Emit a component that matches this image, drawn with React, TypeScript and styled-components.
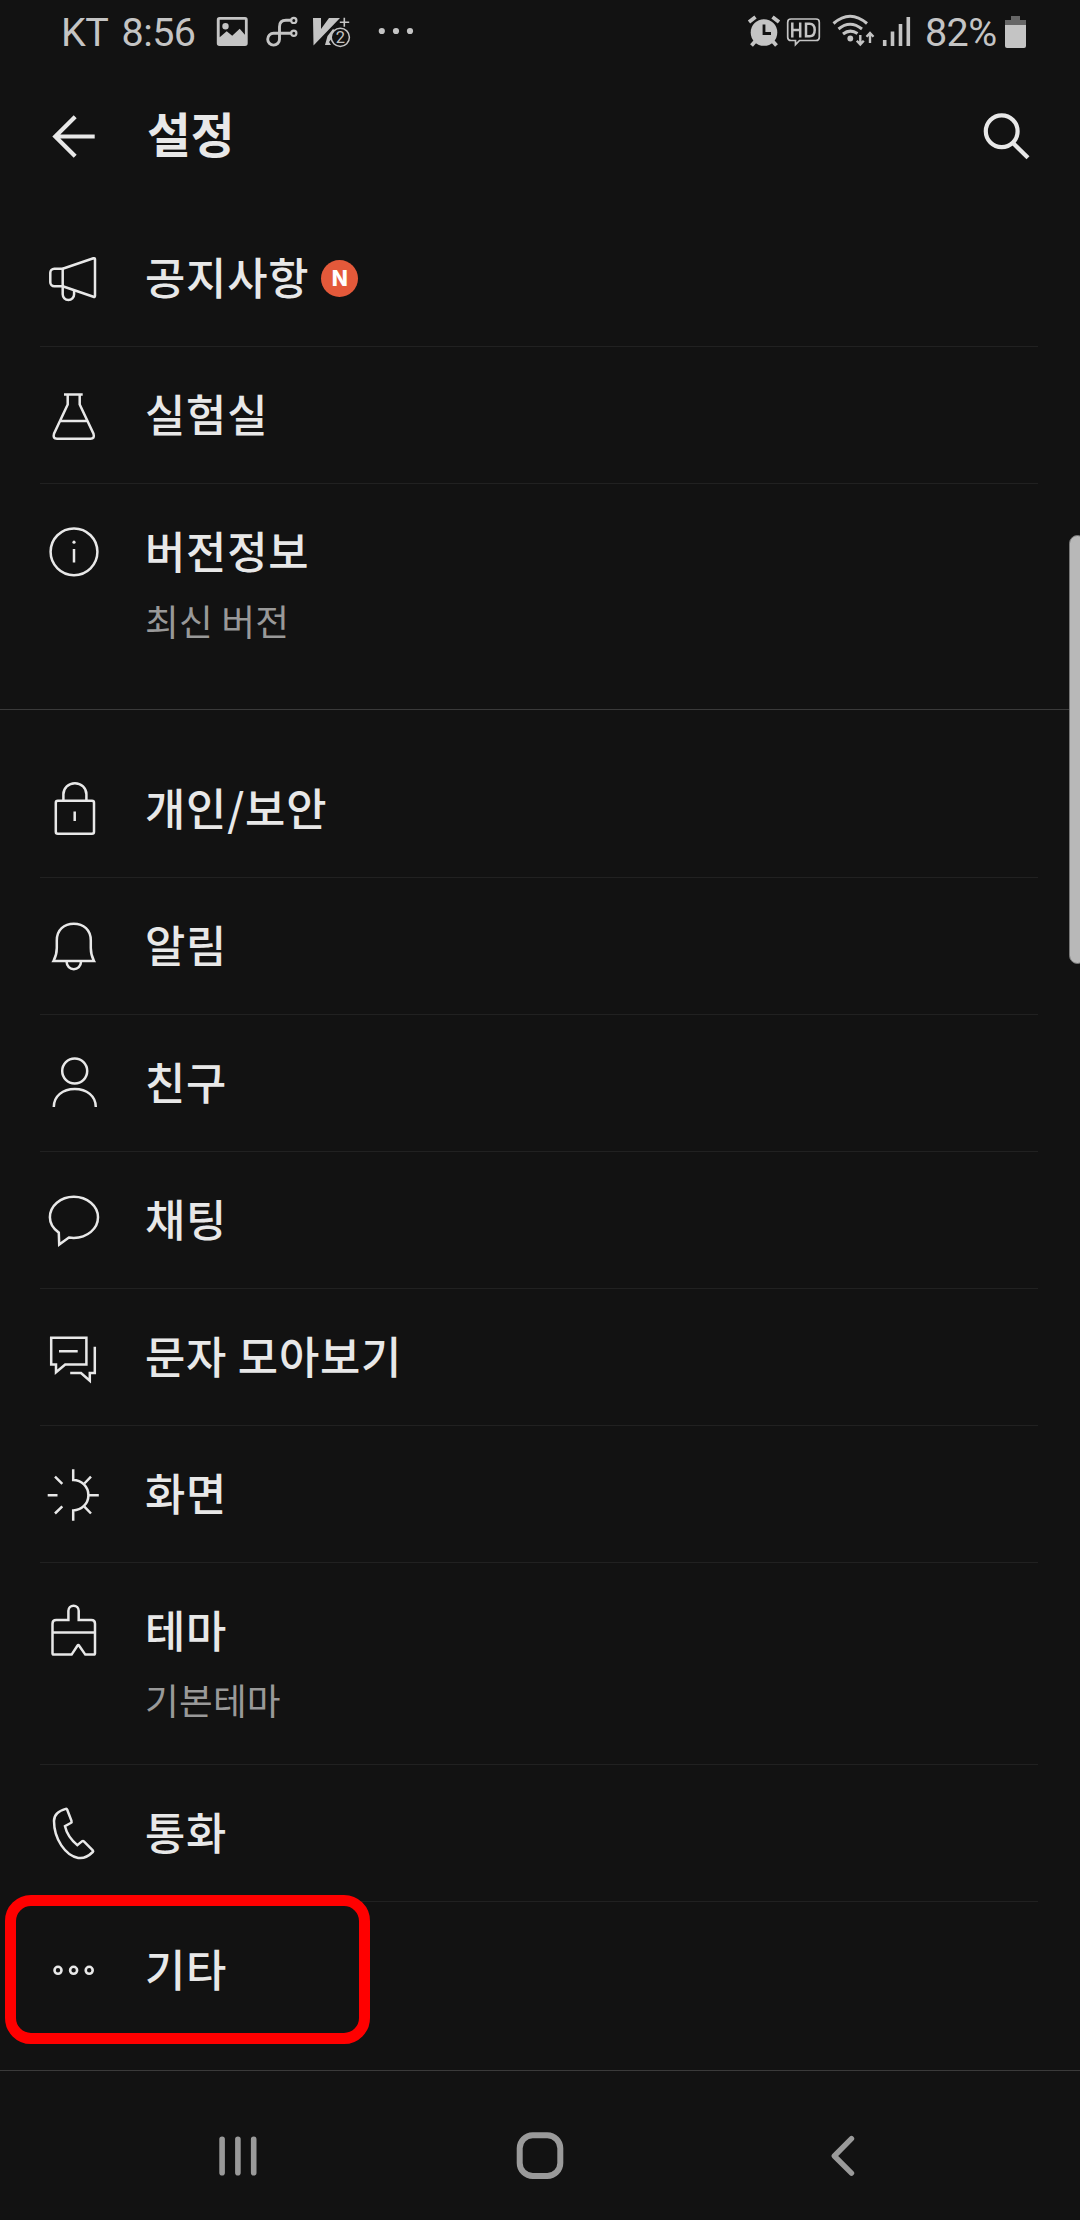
import React from "react";
import styled, { createGlobalStyle } from "styled-components";

const GlobalStyle = createGlobalStyle`
  * { box-sizing: border-box; }
  body { margin: 0; background: #121212; }
`;

const Screen = styled.div`
  position: relative;
  display: flex;
  flex-direction: column;
  width: 1080px;
  height: 2220px;
  overflow: hidden;
  background: #121212;
  color: #e8e8e8;
  font-family: "Noto Sans CJK KR", "Noto Sans", sans-serif;
`;

const StatusBar = styled.div`
  display: flex;
  justify-content: space-between;
  height: 62px;
  padding: 0 52px 0 61px;
  color: #c4c4c4;
  font-family: Roboto, "Noto Sans CJK KR", sans-serif;
`;

const StatusGroup = styled.div`
  display: flex;
  align-items: flex-start;
`;

const StatusText = styled.span<{ $width: number; $gap?: number }>`
  width: ${(p) => p.$width}px;
  font-size: 39.5px;
  line-height: 46px;
  letter-spacing: -0.6px;
  word-spacing: ${(p) => p.$gap ?? 0}px;
  padding-top: 10px;
  white-space: nowrap;
`;

const Glyph = styled.svg`
  display: block;
  flex: none;
  fill: none;
  stroke: currentColor;
`;

const Header = styled.header`
  display: flex;
  align-items: center;
  height: 148px;
  padding: 0 40px 0 44px;
`;

const Title = styled.h1`
  flex: 1;
  margin: 0 0 0 43px;
  padding-bottom: 6px;
  font-size: 47.5px;
  line-height: 60px;
  font-weight: 700;
`;

const Section = styled.section<{ $top: number; $bottom: number }>`
  padding: ${(p) => p.$top}px 0 ${(p) => p.$bottom}px;
  border-bottom: 1px solid #3a3a3a;
`;

const Row = styled.div<{ $tall?: boolean; $last?: boolean }>`
  display: flex;
  align-items: flex-start;
  height: ${(p) => (p.$tall ? 202 : 137)}px;
  margin: 0 42px 0 40px;
  padding: 38px 0 0 4px;
  border-bottom: 1px solid ${(p) => (p.$last ? "transparent" : "#212121")};
`;

const Labels = styled.div`
  display: flex;
  flex-direction: column;
  margin-left: 41px;
`;

const LabelLine = styled.div`
  display: flex;
  align-items: center;
  gap: 12px;
  height: 60px;
`;

const Label = styled.span`
  padding-bottom: 5px;
  font-size: 43.8px;
  line-height: 60px;
  letter-spacing: 0.8px;
  font-weight: 500;
  white-space: nowrap;
`;

const Detail = styled.span`
  margin-top: 12px;
  font-size: 36.7px;
  line-height: 52px;
  letter-spacing: 0.2px;
  color: #999999;
  white-space: nowrap;
`;

const NewBadge = styled.span`
  display: flex;
  align-items: center;
  justify-content: center;
  width: 37px;
  height: 37px;
  border-radius: 50%;
  background: #e4593a;
  color: #ffffff;
  font: 800 21px/37px Inter, sans-serif;
`;

const NavBar = styled.nav`
  display: grid;
  grid-template-columns: 64px 64px 64px;
  justify-content: center;
  column-gap: 238px;
  padding-top: 53px;
  color: #9a9a9a;
`;

const Highlight = styled.div`
  position: absolute;
  left: 5px;
  top: 1895px;
  width: 365px;
  height: 149px;
  border: 11px solid #ff0000;
  border-radius: 26px;
`;

const EdgeHandle = styled.div`
  position: absolute;
  right: -6px;
  top: 535px;
  width: 17px;
  height: 429px;
  border: 1px solid #777777;
  border-radius: 14px;
  background: #b8b8b8;
`;

const icons: Record<string, React.ReactNode> = {
  notice: (
    <>
      <path d="M18.7 20.7H10.3a4 4 0 0 0-4 4v9.600a4 4 0 0 0 4 4h8.400z" />
      <path d="M18.700 20.700 49.400 10.300q1.600-.5 1.600 1v36.500q0 1.600-1.600 1L18.700 38.300" />
      <path d="M18.700 38.300v8a5.700 5.700 0 0 0 11.400 0v-4.300" />
    </>
  ),
  lab: (
    <path d="M20 9.500h18.700M23.700 9.500v10L10 48.800q-1.500 4.900 3 4.900h33.500q4.500 0 3-4.900L35.700 19.500v-10M16.500 36h26.500" />
  ),
  info: (
    <>
      <circle cx="30" cy="29.800" r="23.400" />
      <path d="M30 27v13.500" />
      <circle cx="30" cy="20.200" r="1.600" fill="currentColor" stroke="none" />
    </>
  ),
  lock: (
    <>
      <rect x="11.800" y="21.700" width="38.200" height="33" rx="2" />
      <path d="M19.400 21.700v-6.500a11.500 11 0 0 1 23 0v6.500M30.700 32.500v9.500" />
    </>
  ),
  bell: (
    <>
      <path d="M12.800 24.500C12.800 14 20 7.800 29.800 7.800S46.800 14 46.800 24.500V32q0 7 3.200 13H9.500q3.300-6 3.300-13z" />
      <path d="M22.700 45.200v1a7 7 0 0 0 14.200 0v-1" />
    </>
  ),
  person: (
    <>
      <circle cx="30.700" cy="18" r="12.500" />
      <path d="M9.800 54c0-11 9-18 21-18s21 7 21 18" />
    </>
  ),
  chat: (
    <path d="M14.800 42.600C9.300 38.800 5.900 33.500 5.900 27.300 5.900 15.800 16.500 6.700 29.800 6.700S54 15.800 54 27.300 43.200 47.900 29.800 47.900q-2.500 0-4.900-.4L15.200 54.500z" />
  ),
  messages: (
    <>
      <path d="M7.200 10.700h35.200v26.800H21.200L12 45.200V37.500H7.200zM15 24.200h18.700" />
      <path d="M50.800 19.700V46h-5v7.700L37 46H26.200" />
    </>
  ),
  display: (
    <>
      <path d="M29.200 5.300V16A15.200 15.200 0 0 1 29.200 46.400v10.300" />
      <path d="M3.700 31.200h9.800M45 31.200h9.800M11 12.700l7.300 7.100M11 49.500l7.300-7.100M47 12.700l-6.600 6.800M47 49.500l-6.600-6.800" />
    </>
  ),
  theme: (
    <path d="M24.400 19V9.800a5.100 5.100 0 0 1 10.300 0V19H47.300q3.700 0 3.700 3.700v29.600q0 1.300-1.300 1.300h-8.400L35.200 44.800q-.9-1.400-1.800 0L27.600 53.600H9.800q-1.300 0-1.300-1.300V22.700q0-3.700 3.700-3.700zM8.500 31.400H51" />
  ),
  phone: (
    <path d="M21.800 5.900q-11.800 3.300-11.800 12.100c0 18 11.500 34.600 24.200 36.900 5 .9 10.500-1.900 14.600-5.900q.8-.8 0-1.600l-8.700-8.800q-1-1-2.200-.2l-4.600 3.700C27.800 37.400 22.500 30 21 23.200l5.700-3.200q1.300-.8.800-2.100L23.200 6.800q-.4-1.200-1.400-.9z" />
  ),
  more: (
    <g strokeWidth="2.600">
      <circle cx="14" cy="30.300" r="3.500" />
      <circle cx="29.600" cy="30.300" r="3.500" />
      <circle cx="45.200" cy="30.300" r="3.500" />
    </g>
  ),
};

interface Item {
  icon: string;
  label: string;
  detail?: string;
  isNew?: boolean;
}

const about: Item[] = [
  { icon: "notice", label: "공지사항", isNew: true },
  { icon: "lab", label: "실험실" },
  { icon: "info", label: "버전정보", detail: "최신 버전" },
];

const preferences: Item[] = [
  { icon: "lock", label: "개인/보안" },
  { icon: "bell", label: "알림" },
  { icon: "person", label: "친구" },
  { icon: "chat", label: "채팅" },
  { icon: "messages", label: "문자 모아보기" },
  { icon: "display", label: "화면" },
  { icon: "theme", label: "테마", detail: "기본테마" },
  { icon: "phone", label: "통화" },
  { icon: "more", label: "기타" },
];

function ItemList({ items }: { items: Item[] }) {
  return (
    <>
      {items.map((item, i) => (
        <Row key={item.label} $tall={!!item.detail} $last={i === items.length - 1}>
          <Glyph width="60" height="60" viewBox="0 0 60 60" strokeWidth="2.5">
            {icons[item.icon]}
          </Glyph>
          <Labels>
            <LabelLine>
              <Label>{item.label}</Label>
              {item.isNew && <NewBadge>N</NewBadge>}
            </LabelLine>
            {item.detail && <Detail>{item.detail}</Detail>}
          </Labels>
        </Row>
      ))}
    </>
  );
}

export default function App() {
  return (
    <Screen>
      <GlobalStyle />
      <StatusBar>
        <StatusGroup>
          <StatusText $width={149} $gap={5}>KT 8:56</StatusText>
          {/* picture, linked-notes, V3 and overflow notifications */}
          <Glyph width="210" height="62" viewBox="210 0 210 62">
            <path
              fill="currentColor"
              stroke="none"
              fillRule="evenodd"
              d="M219.500 17h25.500q2.700 0 2.700 2.700v23.600q0 2.700-2.700 2.700h-25.500q-2.700 0-2.700-2.700V19.700q0-2.700 2.700-2.700zM219.700 19.800v17.500l7-6 5.500 4.500 7.500-7 5.200 6V19.800zM225.500 23a3.200 3.200 0 1 1 0 6.400 3.200 3.200 0 0 1 0-6.400z"
            />
            <path d="M291 20.300h-5q-6.500 0-6.500 6.500V39.200a5.900 5.900 0 1 1-5.900-5.900H291" strokeWidth="2.900" />
            <circle cx="293.800" cy="20.400" r="2.600" strokeWidth="2.200" />
            <circle cx="293.800" cy="33.200" r="2.600" strokeWidth="2.200" />
            <path fill="currentColor" stroke="none" d="M313 18h8v11L329 18h11L313.500 45.500z" />
            <path fill="currentColor" stroke="none" d="M333 29l4 3-8 10 2 3h-6l2.500-9z" />
            <path d="M344.300 17.800v9M339.800 22.300h9.400" strokeWidth="1.600" />
            <circle cx="340.300" cy="37.300" r="9.100" fill="#121212" strokeWidth="1.500" />
            <text x="340.300" y="43.200" fontSize="16.500" textAnchor="middle" fill="currentColor" stroke="none">2</text>
            <g fill="currentColor" stroke="none">
              <circle cx="381.800" cy="31" r="3.100" />
              <circle cx="396" cy="31" r="3.100" />
              <circle cx="410" cy="31" r="3.100" />
            </g>
          </Glyph>
        </StatusGroup>
        <StatusGroup>
          {/* alarm, HD voice, wifi and signal */}
          <Glyph width="180" height="62" viewBox="745 0 180 62">
            <circle cx="764" cy="32.500" r="13.300" fill="currentColor" stroke="none" />
            <path d="M764 24.500v9h7" stroke="#121212" strokeWidth="2.800" />
            <path d="M749 22l6.500-5M779 22l-6.500-5M755.500 41l-4 4.500M772.500 41l4 4.500" strokeWidth="3.800" />
            <path d="M791 19h25q3.300 0 3.300 3.300v14.900q0 3.300-3.300 3.300h-16.500l-4 4.200v-4.200H791q-3.300 0-3.300-3.300V22.300q0-3.300 3.300-3.300z" strokeWidth="1.700" />
            <path d="M792.300 22.500v15M800.200 22.500v15M792.300 30h7.900M806 23.700v12.600h3.500q5.200 0 5.200-6.300t-5.200-6.300z" strokeWidth="2.500" />
            <g strokeWidth="3">
              <path d="M833.500 23.500q16.500-14.500 33.500 0M838.500 29q11.500-9.500 23.500 0M843 34q7-5.500 14.500-.5" />
            </g>
            <circle cx="850.300" cy="38.500" r="2.900" fill="currentColor" stroke="none" />
            <path d="M860.300 35v9M856.800 40.700l3.500 3.700 3.500-3.700M870 43v-9M866.500 36.700l3.500-3.700 3.500 3.700" strokeWidth="2.400" />
            <path d="M884.700 40v6M892.500 31.500V46M900.500 24v22M908.300 17v29" strokeWidth="3.600" />
          </Glyph>
          <StatusText $width={77}>82%</StatusText>
          <Glyph width="26" height="62" viewBox="1002 0 26 62">
            <path d="M1011 16h9v4h6v5h-21v-5h6z" fill="#666666" stroke="none" />
            <path d="M1005 25h21v21q0 2-2 2h-17q-2 0-2-2z" fill="currentColor" stroke="none" />
          </Glyph>
        </StatusGroup>
      </StatusBar>
      <Header>
        <Glyph width="60" height="60" viewBox="44 106 60 60" strokeWidth="4.200">
          <path d="M94.700 136.500H55M75.200 116.800 55.300 136.500l19.900 19.800" />
        </Glyph>
        <Title>설정</Title>
        <Glyph width="60" height="60" viewBox="980 106 60 60" strokeWidth="4.200">
          <circle cx="1001.700" cy="131.300" r="15.900" />
          <path d="M1013 143l15 14.800" />
        </Glyph>
      </Header>
      <Section $top={0} $bottom={23}>
        <ItemList items={about} />
      </Section>
      <Section $top={31} $bottom={31}>
        <ItemList items={preferences} />
      </Section>
      <NavBar>
        <Glyph width="64" height="64" viewBox="0 0 64 64" strokeWidth="5.600" strokeLinecap="round">
          <path d="M16.100 15.200v33.600M31.900 15.200v33.600M47.700 15.200v33.600" />
        </Glyph>
        <Glyph width="64" height="64" viewBox="0 0 64 64" strokeWidth="6">
          <rect x="11.700" y="11.300" width="40.600" height="40.600" rx="13" />
        </Glyph>
        <Glyph width="64" height="64" viewBox="0 0 64 64" strokeWidth="5.400" strokeLinecap="round" strokeLinejoin="round">
          <path d="M41.500 14.700 24.300 32l17.200 17.200" />
        </Glyph>
      </NavBar>
      <Highlight />
      <EdgeHandle />
    </Screen>
  );
}
